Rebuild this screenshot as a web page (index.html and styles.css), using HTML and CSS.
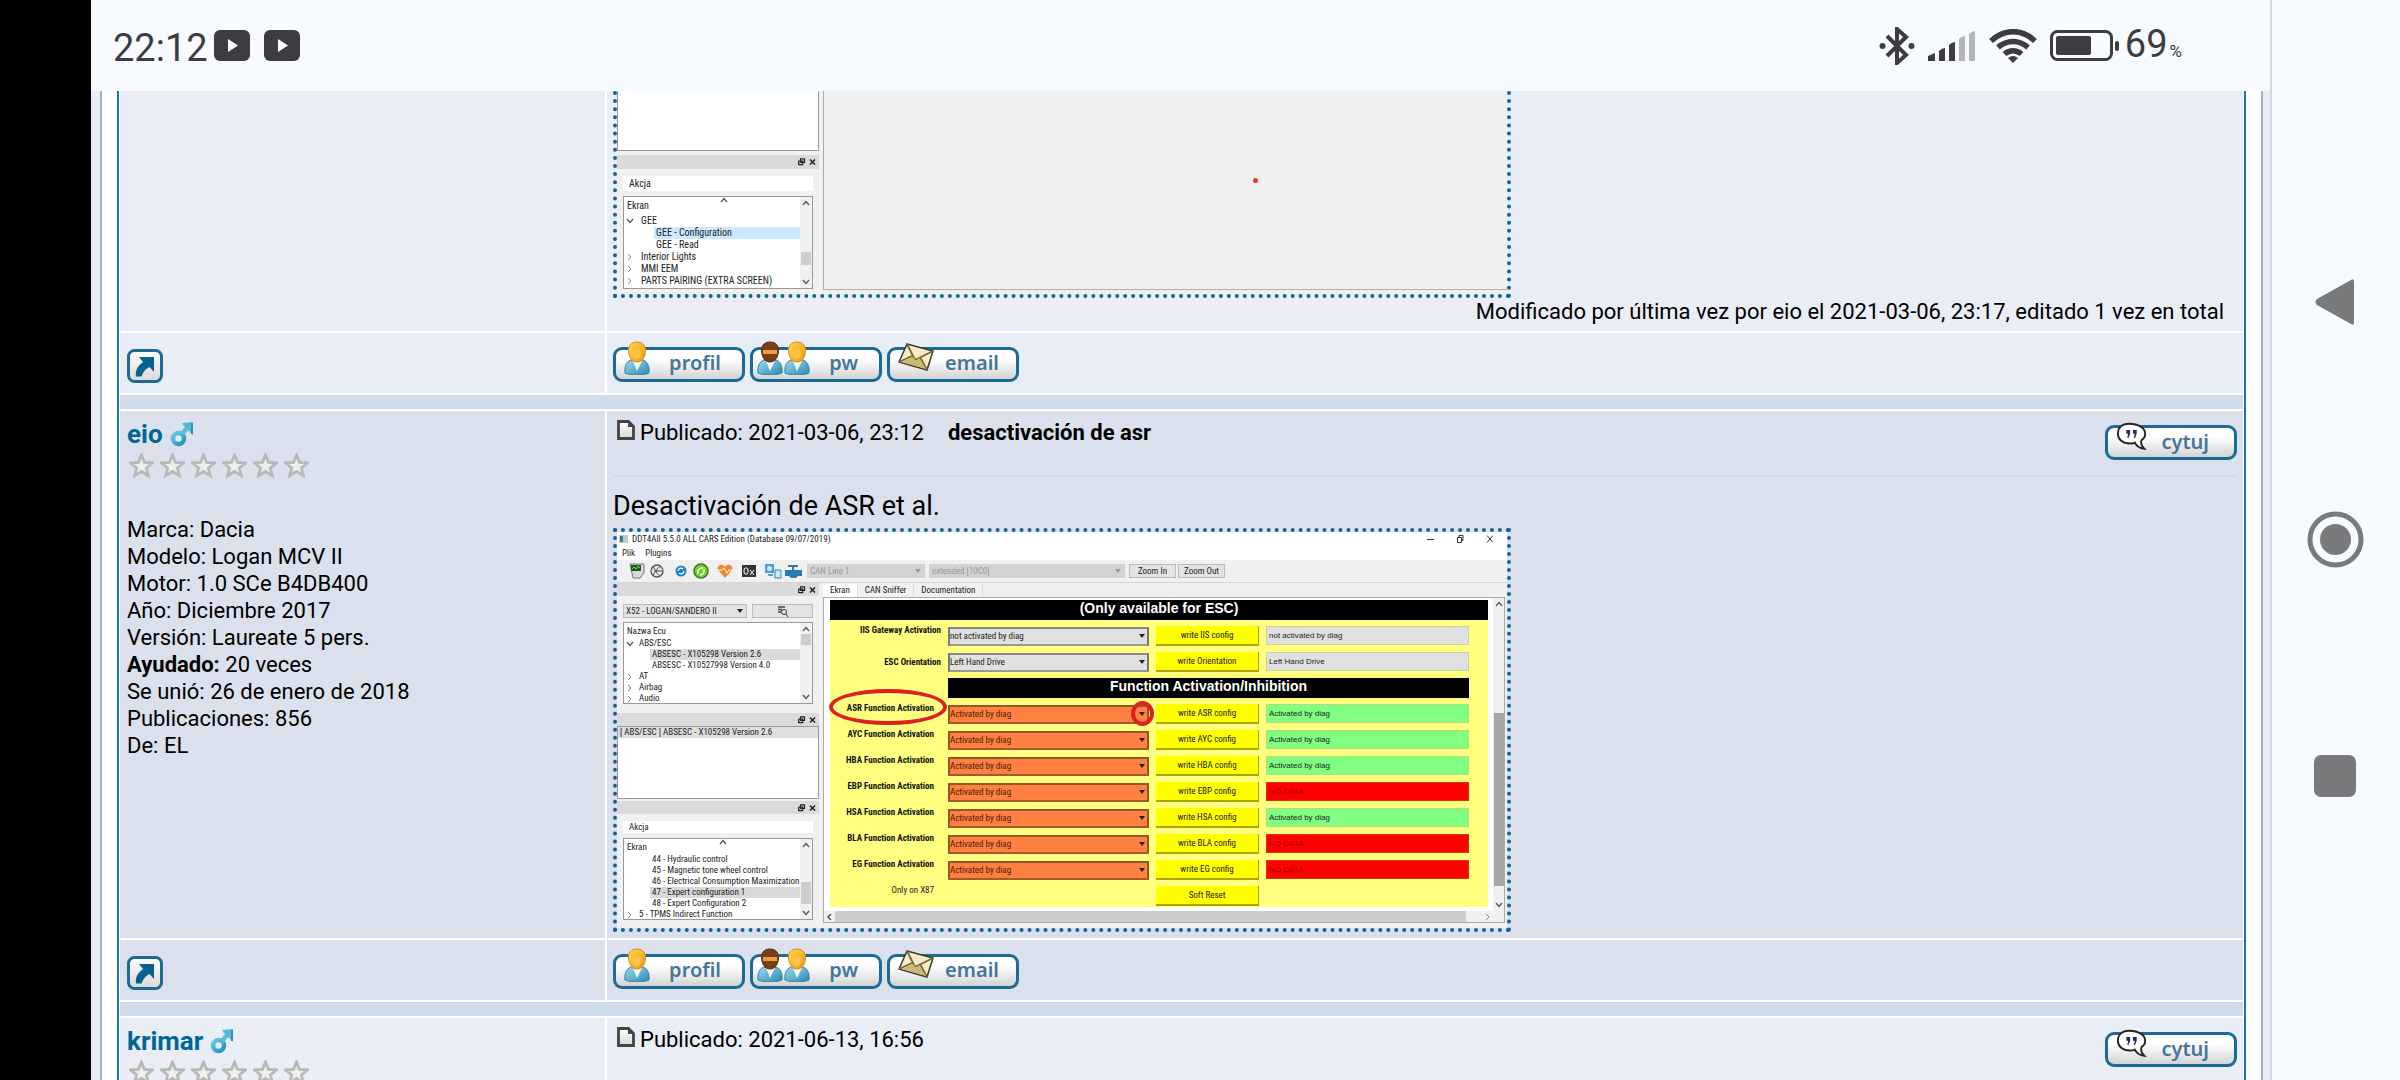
FILE: index.html
```html
<!DOCTYPE html>
<html lang="es">
<head>
<meta charset="utf-8">
<meta name="viewport" content="width=device-width, initial-scale=1">
<title>desactivación de asr</title>
<link rel="stylesheet" href="styles.css">
</head>
<body>
<svg class="sprite" aria-hidden="true">
  <defs>
    <linearGradient id="face" x1="0" y1="0" x2="0" y2="1"><stop offset="0" stop-color="#fff"/><stop offset="1" stop-color="#d8d8d8"/></linearGradient>
    <linearGradient id="coat" x1="0" y1="0" x2="1" y2="1"><stop offset="0" stop-color="#9fdcf0"/><stop offset="1" stop-color="#2c88ae"/></linearGradient>
    <linearGradient id="hair" x1="0" y1="0" x2="1" y2="1"><stop offset="0" stop-color="#ffd84a"/><stop offset="1" stop-color="#ee9412"/></linearGradient>
    <linearGradient id="male-fill" x1="0" y1="0" x2="1" y2="1"><stop offset="0" stop-color="#6fcbe6"/><stop offset="1" stop-color="#1f8fb8"/></linearGradient>
  </defs>
  <symbol id="youtube" viewBox="0 0 36 31"><rect width="36" height="31" rx="6" fill="#3d3d3f"/><path d="M14 9l10 6.500L14 22z" fill="#f7faff"/></symbol>
  <symbol id="male" viewBox="0 0 24 26"><circle cx="8.500" cy="17.500" r="5.500" fill="#d8f0f8" stroke="url(#male-fill)" stroke-width="4.500"/><path d="M12 13l6-7" stroke="#5dbedb" stroke-width="4.500"/><path d="M12 2l11-1v13l-4-4-5-5z" fill="#55b9d8"/><path d="M22 2v11" stroke="#2b93b8" stroke-width="2"/></symbol>
  <symbol id="star" viewBox="0 0 25 25"><path d="M12.500 2l3 7.300 7.900.600-6 5.100 1.900 7.700-6.800-4.200-6.800 4.200 1.900-7.700-6-5.100 7.900-.600z" fill="#eee" stroke="#b8b8b8" stroke-width="2.800"/></symbol>
  <symbol id="page" viewBox="0 0 18 20"><path d="M1.500 1.500h10l5 5v12h-15z" fill="url(#face)" stroke="#444" stroke-width="2.800"/><path d="M11 1v6h6z" fill="#444"/></symbol>
  <symbol id="top" viewBox="0 0 36 34"><rect x="1.500" y="1.500" width="33" height="31" rx="6" fill="url(#face)" stroke="#1d6a93" stroke-width="3"/><path d="M12 8h15v15l-4.500-5c-4 2-6 4.500-8 9.500H9c-1-6 2-11 7-14.500z" fill="#066090"/></symbol>
  <symbol id="person" viewBox="0 0 26 34"><path d="M1 32c-1-8 3-13 7-13h10c4 0 8 5 7 13-5 2.500-19 2.500-24 0z" fill="url(#coat)" stroke="#2d86a9"/><path d="M9 20l4 10 5-10z" fill="#f4fafd"/><path d="M13 1c6 0 9 4 8.500 9-.300 6-3 11-8.500 11S5 16 4.500 10C4 5 7 1 13 1z" fill="url(#hair)" stroke="#dd8c1c"/><path d="M8 10c3 1 5-1 7-3 0 2 2 3 3 3-.500 5-2 8-5 8s-5-3-5-8z" fill="#ffc14d"/></symbol>
  <symbol id="person-dark" viewBox="0 0 26 34"><path d="M1 32c-1-8 3-13 7-13h10c4 0 8 5 7 13-5 2.500-19 2.500-24 0z" fill="url(#coat)" stroke="#2d86a9"/><path d="M9 20l4 10 5-10z" fill="#f4fafd"/><path d="M13 1c6 0 9 4 8.500 9-.300 6-3 11-8.500 11S5 16 4.500 10C4 5 7 1 13 1z" fill="#7a3d17" stroke="#5e2e12"/><path d="M6 9h14v4H6z" fill="#e9a03a"/></symbol>
  <symbol id="mail" viewBox="0 0 36 30"><path d="M9 2l26 7-6 19L1 20z" fill="#f6ecc4" stroke="#3e3a2c" stroke-width="1.500"/><path d="M9 2l8 16 18-9M1 20l13-6M29 28l-7-13" fill="none" stroke="#756839" stroke-width="1.800"/><path d="M3 20l12-5 3 4 3-3 7 11z" fill="#cdb873"/></symbol>
  <symbol id="quote" viewBox="0 0 34 30"><path d="M14 1.500C6 1.500 2 6 2 12s5 10.500 13 10.500c2 0 4 0 5-1 2 4 5 6 10 6.500-3-3-4-6-3-9 3-2 4-4 4-7C31 6 24 1.500 14 1.500z" fill="#fff" stroke="#222" stroke-width="2"/><path d="M11 8h4v4l-2 5-1-1 1-4h-2zM18 8h4v4l-2 5-1-1 1-4h-2z" fill="#26246b"/></symbol>
  <symbol id="drop" viewBox="0 0 6 4"><path d="M0 0h6L3 4z" fill="currentColor"/></symbol>
  <symbol id="chev-up" viewBox="0 0 8 6"><path d="M1 5l3-3.500L7 5" fill="none" stroke="#555" stroke-width="1.300"/></symbol>
  <symbol id="chev-down" viewBox="0 0 8 6"><path d="M1 1l3 3.500L7 1" fill="none" stroke="#555" stroke-width="1.300"/></symbol>
  <symbol id="chev-right" viewBox="0 0 8 6"><path d="M2 0l3 3-3 3" fill="none" stroke="#888" stroke-width="1"/></symbol>
  <symbol id="chev-left" viewBox="0 0 8 6"><path d="M6 0L3 3l3 3" fill="none" stroke="#555" stroke-width="1.500"/></symbol>
  <symbol id="dock-ctl" viewBox="0 0 18 8"><path d="M2.500.800h4v3.500h-4zM.700 3h4v3.600h-4z" fill="#ddd" stroke="#222" stroke-width="1.200"/><path d="M12 1.500l5 5M17 1.500l-5 5" stroke="#222" stroke-width="1.500"/></symbol>
</svg>

<div class="device">
  <div class="notch"></div>
  <div class="screen">
    <header class="status">
      <span class="clock">22:12</span>
      <svg class="yt" aria-label="YouTube"><use href="#youtube"/></svg>
      <svg class="yt" aria-label="YouTube"><use href="#youtube"/></svg>
      <div class="signals">
        <svg width="36" height="38" viewBox="0 0 36 38"><path d="M8 9l19 19-9 8V2l9 8L8 29" fill="none" stroke="#3d3d3f" stroke-width="4"/><circle cx="3.500" cy="19" r="3" fill="#3d3d3f"/><circle cx="32.500" cy="19" r="3" fill="#3d3d3f"/></svg>
        <svg width="48" height="30" viewBox="0 0 48 30"><g fill="#3d3d3f"><path d="M0 25l7-3v8H0z"/><path d="M11 20q3-3 6-3v13h-6z"/><path d="M21 14q3-3 6-3v19h-6z"/></g><g fill="#b4b4b6"><path d="M31 8q3-3 6-3v25h-6z"/><path d="M41 3q3-3 6-3v30h-6z"/></g></svg>
        <svg width="48" height="34" viewBox="0 0 48 34"><g fill="none" stroke="#3d3d3f" stroke-width="5.500"><path d="M2 12C15-.500 33-.500 46 12"/><path d="M9 18.500c9-8 21-8 30 0"/><path d="M15.500 25c5-4.500 12-4.500 17 0"/></g><path d="M19 29q5-4 10 0l-5 5z" fill="#3d3d3f"/></svg>
        <svg width="70" height="31" viewBox="0 0 70 31"><rect x="1.500" y="1.500" width="60" height="28" rx="6" fill="none" stroke="#3d3d3f" stroke-width="3"/><rect x="6" y="6" width="35" height="19" rx="2" fill="#3d3d3f"/><rect x="65" y="11" width="4" height="10" rx="2" fill="#3d3d3f"/></svg>
        <span class="level">69<small>%</small></span>
      </div>
    </header>

    <div class="viewport">
      <main class="forum">
        <article class="post odd">
          <div class="cell"></div>
          <div class="cell clipped">
            <div class="shot shot-cut">
              <div class="docks">
                <div class="pane blank"></div>
                <div class="dock-title"><svg class="dock-ctl"><use href="#dock-ctl"/></svg></div>
                <div class="filter">Akcja</div>
                <div class="tree sorted">
                  <div class="tree-body">
                    <div class="tree-head">Ekran<svg><use href="#chev-up"/></svg></div>
                    <div class="leaf"><svg><use href="#chev-down"/></svg>GEE</div>
                    <div class="leaf deep picked">GEE - Configuration</div>
                    <div class="leaf deep">GEE - Read</div>
                    <div class="leaf"><svg><use href="#chev-right"/></svg>Interior Lights</div>
                    <div class="leaf"><svg><use href="#chev-right"/></svg>MMI EEM</div>
                    <div class="leaf"><svg><use href="#chev-right"/></svg>PARTS PAIRING (EXTRA SCREEN)</div>
                  </div>
                  <div class="scroll"><svg><use href="#chev-up"/></svg><i class="thumb low"></i><svg><use href="#chev-down"/></svg></div>
                </div>
              </div>
              <div class="void"><i class="dot"></i></div>
            </div>
            <p class="edited">Modificado por última vez por eio el 2021-03-06, 23:17, editado 1 vez en total</p>
          </div>
          <div class="cell bar"><a href="#" aria-label="Arriba"><svg class="to-top"><use href="#top"/></svg></a></div>
          <div class="cell bar">
            <a class="pill" href="#"><svg class="who"><use href="#person"/></svg><span>profil</span></a>
            <a class="pill" href="#"><svg class="who"><use href="#person-dark"/></svg><svg class="who"><use href="#person"/></svg><span>pw</span></a>
            <a class="pill" href="#"><svg class="letter"><use href="#mail"/></svg><span>email</span></a>
          </div>
          <div class="rule"></div>
        </article>

        <article class="post even">
          <div class="cell author">
            <div class="name"><a href="#">eio</a><svg class="sex"><use href="#male"/></svg></div>
            <div class="stars"><svg><use href="#star"/></svg><svg><use href="#star"/></svg><svg><use href="#star"/></svg><svg><use href="#star"/></svg><svg><use href="#star"/></svg><svg><use href="#star"/></svg></div>
            <div class="details">
              Marca: Dacia<br>Modelo: Logan MCV II<br>Motor: 1.0 SCe B4DB400<br>Año: Diciembre 2017<br>Versión: Laureate 5 pers.<br><b>Ayudado:</b> 20 veces<br>Se unió: 26 de enero de 2018<br>Publicaciones: 856<br>De: EL
            </div>
          </div>
          <div class="cell">
            <div class="meta">
              <a href="#" aria-label="Mensaje"><svg class="page"><use href="#page"/></svg></a>
              <span>Publicado: 2021-03-06, 23:12</span><b>desactivación de asr</b>
              <a class="pill quote" href="#"><svg class="bubble"><use href="#quote"/></svg><span>cytuj</span></a>
            </div>
            <p class="message">Desactivación de ASR et al.</p>
            <div class="shot">
              <div class="win-title"><svg width="9" height="8"><path d="M0 0h9v8H0z" fill="#b5cfd0"/><path d="M1 1h3v6H1z" fill="#52777a"/></svg><span>DDT4All 5.5.0 ALL CARS Edition (Database 09/07/2019)</span>
                <svg class="win-ctl" viewBox="0 0 66 8"><g fill="none" stroke="#333"><path d="M0 4.500h7M30.500 2.500h4v5h-4zM32 2V.500h4v5h-1M60 .500l6 7M66 .500l-6 7"/></g></svg></div>
              <div class="menu"><span>Plik</span><span>Plugins</span></div>
              <div class="toolbar">
                <svg class="tools" viewBox="0 0 174 16">
                  <path d="M1 1h14v9l-4 5H4z" fill="#d8ddd4" stroke="#777"/><path d="M2 2h10v6H2z" fill="#195c1c"/><path d="M3 6l2-2 2 2 2-3 2 2" fill="none" stroke="#7be05b"/>
                  <circle cx="28" cy="8" r="6" fill="#e4e4e4" stroke="#555" stroke-width="1.300"/><path d="M24 4l3 4-3 4M31 4c-5 2-5 6 0 9M25 8h8" fill="none" stroke="#555"/>
                  <circle cx="52" cy="8" r="5.500" fill="#1b83c8"/><path d="M49 8a3 3 0 0 1 5-2M55 8a3 3 0 0 1-5 2" fill="none" stroke="#fff" stroke-width="1.300"/>
                  <circle cx="72" cy="8" r="7" fill="#74cf2a" stroke="#3a7d23" stroke-width="1.600"/><path d="M69 11c-1-4 1-6 5-6M75 6c1 3-1 6-4 6" fill="none" stroke="#eaffcf" stroke-width="1.800"/>
                  <path d="M96 15l-7-8c-2-4 4-8 7-3 3-5 9-1 7 3z" fill="#f3872c"/><path d="M89 7h4l2-2 3 5 2-3h4" fill="none" stroke="#fff"/>
                  <path d="M113 2h14v12h-14z" fill="#333"/><path d="M116 5h2q1 0 1 3t-1 3h-2q-1 0-1-3t1-3zM121 7l4 5M125 7l-4 5" fill="none" stroke="#fff"/>
                  <path d="M136 1h9v9h-9z" fill="#4c9fdc"/><circle cx="140.500" cy="5.500" r="2.500" fill="#d5ecfa"/><path d="M146 7h6v8h-6z" fill="#cde5f5" stroke="#2a83c2"/><path d="M139 12h5" stroke="#2a83c2" stroke-width="1.500"/>
                  <path d="M159 2h10v2h-4v3h8v6h-4l-2 2h-5l-2-2h-4V7h7V4h-4z" fill="#2b7bb2"/>
                </svg>
                <label class="combo off line"><select disabled aria-label="Línea CAN"><option>CAN Line 1</option></select><svg><use href="#drop"/></svg></label>
                <label class="combo off session"><select disabled aria-label="Sesión"><option>extended [10C0]</option></select><svg><use href="#drop"/></svg></label>
                <button class="tool">Zoom In</button><button class="tool">Zoom Out</button>
              </div>
              <div class="workspace">
                <div class="docks">
                  <div class="dock-title"><svg class="dock-ctl"><use href="#dock-ctl"/></svg></div>
                  <div class="search">
                    <label class="combo car"><select aria-label="Vehículo"><option>X52 - LOGAN/SANDERO II</option></select><svg><use href="#drop"/></svg></label>
                    <button class="tool" aria-label="Buscar"><svg width="12" height="11"><path d="M1 1h7M1 3.500h4M1 6h3" stroke="#444" stroke-width="1.500"/><circle cx="7" cy="6" r="2.500" fill="none" stroke="#333"/><path d="M9 8l2 3" stroke="#333"/></svg></button>
                  </div>
                  <div class="tree">
                    <div class="tree-body">
                      <div class="tree-head">Nazwa Ecu</div>
                      <div class="leaf"><svg><use href="#chev-down"/></svg>ABS/ESC</div>
                      <div class="leaf deep picked">ABSESC - X105298 Version 2.6</div>
                      <div class="leaf deep">ABSESC - X10527998 Version 4.0</div>
                      <div class="leaf"><svg><use href="#chev-right"/></svg>AT</div>
                      <div class="leaf"><svg><use href="#chev-right"/></svg>Airbag</div>
                      <div class="leaf"><svg><use href="#chev-right"/></svg>Audio</div>
                    </div>
                    <div class="scroll"><svg><use href="#chev-up"/></svg><i class="thumb"></i><svg><use href="#chev-down"/></svg></div>
                  </div>
                  <div class="dock-title"><svg class="dock-ctl"><use href="#dock-ctl"/></svg></div>
                  <div class="pane"><div class="current">[ ABS/ESC ] ABSESC - X105298 Version 2.6</div></div>
                  <div class="dock-title"><svg class="dock-ctl"><use href="#dock-ctl"/></svg></div>
                  <div class="filter">Akcja</div>
                  <div class="tree sorted">
                    <div class="tree-body">
                      <div class="tree-head">Ekran<svg><use href="#chev-up"/></svg></div>
                      <div class="leaf deep">44 - Hydraulic control</div>
                      <div class="leaf deep">45 - Magnetic tone wheel control</div>
                      <div class="leaf deep">46 - Electrical Consumption Maximization</div>
                      <div class="leaf deep picked">47 - Expert configuration 1</div>
                      <div class="leaf deep">48 - Expert Configuration 2</div>
                      <div class="leaf"><svg><use href="#chev-right"/></svg>5 - TPMS Indirect Function</div>
                    </div>
                    <div class="scroll"><svg><use href="#chev-up"/></svg><i class="thumb mid"></i><svg><use href="#chev-down"/></svg></div>
                  </div>
                </div>
                <div class="stage">
                  <div class="tabs"><span class="on">Ekran</span><span>CAN Sniffer</span><span>Documentation</span></div>
                  <div class="frame">
                    <div class="sheet">
                      <h3>(Only available for ESC)</h3>
                      <div class="params">
                        <b class="wide">IIS Gateway Activation</b><label class="combo grey"><select aria-label="IIS"><option>not activated by diag</option></select><svg><use href="#drop"/></svg></label><button>write IIS config</button><output class="grey">not activated by diag</output>
                        <b class="wide down">ESC Orientation</b><label class="combo grey"><select aria-label="ESC"><option>Left Hand Drive</option></select><svg><use href="#drop"/></svg></label><button>write Orientation</button><output class="grey">Left Hand Drive</output>
                        <h3>Function Activation/Inhibition</h3>
                        <b class="ringed">ASR Function Activation<i class="ring"></i></b><label class="combo"><select aria-label="ASR"><option>Activated by diag</option></select><svg><use href="#drop"/></svg><i class="ring small"></i></label><button>write ASR config</button><output>Activated by diag</output>
                        <b>AYC Function Activation</b><label class="combo"><select aria-label="AYC"><option>Activated by diag</option></select><svg><use href="#drop"/></svg></label><button>write AYC config</button><output>Activated by diag</output>
                        <b>HBA Function Activation</b><label class="combo"><select aria-label="HBA"><option>Activated by diag</option></select><svg><use href="#drop"/></svg></label><button>write HBA config</button><output>Activated by diag</output>
                        <b>EBP Function Activation</b><label class="combo"><select aria-label="EBP"><option>Activated by diag</option></select><svg><use href="#drop"/></svg></label><button>write EBP config</button><output class="none">NO DATA</output>
                        <b>HSA Function Activation</b><label class="combo"><select aria-label="HSA"><option>Activated by diag</option></select><svg><use href="#drop"/></svg></label><button>write HSA config</button><output>Activated by diag</output>
                        <b>BLA Function Activation</b><label class="combo"><select aria-label="BLA"><option>Activated by diag</option></select><svg><use href="#drop"/></svg></label><button>write BLA config</button><output class="none">NO DATA</output>
                        <b>EG Function Activation</b><label class="combo"><select aria-label="EG"><option>Activated by diag</option></select><svg><use href="#drop"/></svg></label><button>write EG config</button><output class="none">NO DATA</output>
                        <span class="note">Only on X87</span><button class="reset">Soft Reset</button>
                      </div>
                    </div>
                    <div class="scroll"><svg><use href="#chev-up"/></svg><i class="thumb tall"></i><svg><use href="#chev-down"/></svg></div>
                    <div class="hscroll"><svg><use href="#chev-left"/></svg><i></i><svg><use href="#chev-right"/></svg></div>
                  </div>
                </div>
              </div>
            </div>
          </div>
          <div class="cell bar"><a href="#" aria-label="Arriba"><svg class="to-top"><use href="#top"/></svg></a></div>
          <div class="cell bar">
            <a class="pill" href="#"><svg class="who"><use href="#person"/></svg><span>profil</span></a>
            <a class="pill" href="#"><svg class="who"><use href="#person-dark"/></svg><svg class="who"><use href="#person"/></svg><span>pw</span></a>
            <a class="pill" href="#"><svg class="letter"><use href="#mail"/></svg><span>email</span></a>
          </div>
          <div class="rule"></div>
        </article>

        <article class="post odd">
          <div class="cell author">
            <div class="name"><a href="#">krimar</a><svg class="sex"><use href="#male"/></svg></div>
            <div class="stars"><svg><use href="#star"/></svg><svg><use href="#star"/></svg><svg><use href="#star"/></svg><svg><use href="#star"/></svg><svg><use href="#star"/></svg><svg><use href="#star"/></svg></div>
          </div>
          <div class="cell">
            <div class="meta">
              <a href="#" aria-label="Mensaje"><svg class="page"><use href="#page"/></svg></a>
              <span>Publicado: 2021-06-13, 16:56</span>
              <a class="pill quote" href="#"><svg class="bubble"><use href="#quote"/></svg><span>cytuj</span></a>
            </div>
          </div>
        </article>
      </main>
    </div>
  </div>
  <nav class="keys">
    <button aria-label="Atrás"><svg width="40" height="48"><path d="M36 2q3-2 3 2v40q0 4-3 2L2 27q-3-3 0-6z" fill="#787a7b"/></svg></button>
    <button aria-label="Inicio"><svg width="57" height="57"><circle cx="28.500" cy="28.500" r="25.500" fill="none" stroke="#787a7b" stroke-width="5"/><circle cx="28.500" cy="28.500" r="15.500" fill="#787a7b"/></svg></button>
    <button aria-label="Recientes"><svg width="42" height="42"><rect width="42" height="42" rx="7" fill="#787a7b"/></svg></button>
  </nav>
</div>
</body>
</html>
```
FILE: styles.css
```css
* { box-sizing: border-box; }
body { margin: 0; background: #000; color: #000; font-family: Roboto, sans-serif; font-size: 22px; line-height: 27px; }
p, h3 { margin: 0; }
a { color: #069; text-decoration: none; }
svg { display: block; flex: none; }
i { display: block; }
.sprite { position: absolute; width: 0; height: 0; }

/* phone shell */
.device { display: grid; grid-template-columns: 91px 1fr 130px; height: 100vh; overflow: hidden; }
.screen { display: flex; flex-direction: column; min-width: 0; min-height: 0; background: #e9edf5; }
.status { display: flex; align-items: center; flex: none; height: 91px; padding: 0 88px 0 22px; background: #f7faff; color: #3d3d3f; }
.clock { margin-right: 6px; font-size: 38px; line-height: 44px; padding-top: 4px; }
.yt { width: 36px; height: 31px; margin-right: 14px; }
.signals { display: flex; align-items: center; gap: 13px; margin-left: auto; }
.level { margin-left: -8px; padding-top: 4px; font-size: 38px; line-height: 44px; }
.level small { margin-left: 2px; font-size: 17px; }
.keys { display: flex; flex-direction: column; align-items: center; justify-content: center; gap: 60px; padding: 0 2px 2px 0; background: #f7faff; border-left: 2px solid #d5d9e4; }
.keys button { display: grid; place-items: center; width: 100px; height: 177px; padding: 0; border: 0; background: none; }

/* forum */
.viewport { flex: 1; min-height: 0; overflow: hidden; margin: 0 7px 0 9px; padding: 0 15px; background: #fff; border: 2px solid #a3b1bd; border-width: 0 2px; }
.forum { padding: 0 1px; border: 2px solid #1b7499; border-width: 0 2px; }
.post { display: grid; grid-template-columns: 485px 1fr; gap: 2px; margin-bottom: 2px; }
.cell { min-width: 0; padding: 6px; background: #dae1ec; }
.odd .cell { background: #e9edf5; }
.cell.author { padding: 6px 7px; }
.cell.clipped { display: flex; flex-direction: column; height: 240px; padding: 0 6px; }
.rule { grid-column: 1 / -1; height: 14px; background: #cfdbe8; }
.bar { display: flex; align-items: center; gap: 5px; height: 60px; }
.edited { padding: 0 13px; text-align: right; }
.to-top { width: 36px; height: 34px; margin: 5px 1px 0; }
.name { display: flex; align-items: center; gap: 7px; height: 34px; font-size: 26px; line-height: 34px; font-weight: 700; }
.sex { width: 24px; height: 26px; }
.stars { display: flex; gap: 6px; padding: 2px; }
.stars svg { width: 25px; height: 25px; }
.details { padding: 36px 0 0; }
.meta { display: flex; height: 60px; border-bottom: 2px solid #cfdce8; padding-left: 3px; }
.meta span, .meta b { padding-top: 2px; }
.meta b { margin-left: 24px; }
.page { width: 18px; height: 20px; margin: 3px 5px 0 1px; }
.message { padding: 12px 0 5px; font-size: 27px; line-height: 34px; }

/* forum image buttons */
.pill { display: flex; align-items: center; width: 132px; height: 35px; padding: 0 21px 0 8px; border: 3px solid #1a6c96; border-radius: 9px; background: linear-gradient(#fff 30%, #d3d3d3); color: #44759a; font: 600 20px/26px "Noto Sans", sans-serif; }
.bar .pill { margin-top: 2px; }
.pill span { margin-left: auto; padding-bottom: 2px; }
.pill:has(.who + .who) { padding-left: 4px; }
.pill:has(.letter) { padding-right: 17px; }
.who { width: 26px; height: 34px; margin: -12px 1px 0 0; }
.letter { width: 36px; height: 30px; margin: -14px 0 0; }
.quote { margin: 8px 0 0 auto; padding-right: 25px; }
.meta .quote span { padding: 0 0 2px; }
.bubble { width: 32px; height: 29px; margin-top: -12px; }

/* attached screen captures */
.shot { width: 898px; height: 404px; border: 4px dotted #116592; background: #f0f0f0 padding-box; color: #222; font: 9px/11px "Liberation Sans Narrow", "Roboto Condensed", Roboto, sans-serif; white-space: nowrap; }
.shot-cut { display: flex; gap: 4px; flex: none; height: 207px; border-top: 0; font-size: 10px; line-height: 12px; }
.shot select, .shot button { margin: 0; font: inherit; color: inherit; }
.docks { width: 202px; flex: none; }
.dock-title { display: flex; align-items: center; justify-content: flex-end; height: 13px; padding-right: 3px; background: #dadada; }
.dock-ctl { width: 18px; height: 8px; }
.pane { height: 73px; margin-bottom: 2px; background: #fff; border: 1px solid #999; }
.pane.blank { height: 60px; margin-bottom: 4px; border-top: 0; }
.current { background: #dedede; padding-left: 2px; }
.filter { margin: 7px 6px 5px; padding-left: 6px; line-height: 12px; background: #fff; }
.tree { display: flex; height: 82px; margin: 0 6px; border: 1px solid #999; background: #fff; overflow: hidden; }
.tree-body { flex: 1; overflow: hidden; }
.tree-head { display: flex; height: 15px; padding: 3px 0 0 3px; }
.sorted .tree-head { padding-top: 0; line-height: 17px; }
.tree-head svg { width: 8px; height: 6px; margin: 0 auto; }
.leaf { display: flex; align-items: center; padding-left: 2px; }
.leaf svg { width: 8px; height: 6px; margin-right: 5px; }
.deep { margin-left: 26px; }
.picked { background: #d9d9d9; }
.shot-cut .picked { background: #cce8ff; }
.shot-cut .deep { margin-left: 30px; }
.shot-cut .leaf svg { margin-right: 7px; }
.shot-cut .dock-title { height: 14px; }
.shot-cut .filter { margin: 7px 6px 5px; line-height: 15px; }
.shot-cut .tree { height: 93px; }
.shot-cut .tree-head { height: 18px; }
.void { flex: 1; margin-bottom: 4px; border: 1px solid #aaa; border-width: 0 0 1px 1px; }
.dot { width: 5px; height: 5px; margin: 87px 0 0 429px; border-radius: 50%; background: #e33; }
.scroll { display: flex; flex-direction: column; align-items: center; justify-content: space-between; width: 12px; padding: 3px 0; background: #f0f0f0; }
.scroll svg { width: 8px; height: 6px; }
.thumb { width: 10px; height: 11px; margin: 2px 0 auto; background: #cdcdcd; }
.thumb.mid { height: 22px; margin: auto 0 6px; }
.thumb.low { height: 13px; margin: auto 0 14px; }
.thumb.tall { height: 173px; margin: auto 0 16px; background: #a6a6a6; }
.win-title { display: flex; align-items: center; gap: 4px; height: 14px; padding: 0 14px 0 2px; background: #fff; }
.win-ctl { width: 66px; height: 8px; margin-left: auto; }
.menu { display: flex; gap: 10px; height: 14px; padding: 2px 5px; background: #fff; }
.toolbar { display: flex; align-items: center; height: 23px; padding-left: 12px; border-bottom: 1px solid #d5d5d5; }
.tools { width: 174px; height: 16px; margin-right: 4px; }
.tool { width: 47px; height: 14px; padding: 0; border: 1px solid #bbb; background: #e3e3e3; }
.tool svg { margin: auto; }
.toolbar .tool { margin-right: 2px; }
.combo { position: relative; display: grid; align-items: center; }
.combo > * { grid-area: 1 / 1; }
.combo > svg { justify-self: end; width: 6px; height: 4px; margin-right: 4px; pointer-events: none; }
.combo select { appearance: none; width: 100%; height: 14px; padding: 0 2px; border: 1px solid #bbb; border-radius: 0; background: #e3e3e3; opacity: 1; }
.combo.off { margin-right: 4px; color: #999; }
.off select { background: #d2d2d2; border-color: #d2d2d2; }
.line { width: 118px; }
.session { width: 196px; }
.workspace { display: flex; gap: 3px; }
.search { display: flex; gap: 5px; padding: 8px 6px 4px; }
.car { width: 124px; }
.search .tool { flex: 1; }
.docks .search + .tree { margin-bottom: 9px; }
.stage { flex: 1; padding: 1px 2px 0 1px; }
.tabs { display: flex; line-height: 13px; }
.tabs span { padding: 0 7px; border: 1px solid #ddd; border-width: 0 1px 0 0; }
.tabs .on { background: #fff; }
.frame { display: grid; grid-template-columns: 1fr 11px; grid-template-rows: 313px 11px; border: 1px solid #aaa; background: #fff; }
.frame .scroll { width: 11px; }
.sheet { margin: 2px 5px 4px 6px; background: #ffff80; }
.shot h3 { height: 20px; background: #000; color: #fff; text-align: center; font: 700 14px/17px "Liberation Sans", Arial, sans-serif; }
.params { display: grid; grid-template-columns: 111px 201px 103px 203px; grid-auto-rows: 20px; gap: 6px 7px; padding-top: 6px; color: #222; }
.params h3 { grid-column: 2 / -1; }
.params b { padding-right: 7px; text-align: right; line-height: 9px; color: #111; }
.params .wide { padding-right: 0; }
.params .down { padding-top: 6px; }
.params .note { padding-right: 7px; text-align: right; line-height: 9px; }
.params .reset { grid-column: 3; }
.params button { padding: 0; border: solid #a8a800; border-width: 0 1px 2px 0; background: #ff0; }
.params select { height: 19px; padding: 0; border: 2px solid; border-color: #8f5a28 #8f5a28 #a35c27 #8f5a28; background: #ff8040; color: #4a1c0a; }
.params .grey select { border-color: #888 #777 #999 #777; background: #e0e0e0; color: #222; }
.params output { height: 19px; padding-left: 2px; border: 1px solid #b5dc7c; background: #80ff80; font: 8px/17px "Liberation Sans", Arial, sans-serif; }
.params output.grey { border-color: #cfcf9c; background: #e0e0e0; }
.params output.none { border-color: #d63a00; background: #f00; color: #a00; }
.ringed { position: relative; }
.ring { position: absolute; inset: -15px -6px -1px -1px; border: 4px solid #e02020; border-radius: 50%; }
.ring.small { inset: -3px -5px -2px auto; width: 23px; }
.hscroll { grid-column: 1 / -1; display: flex; align-items: center; padding: 0 12px 0 1px; background: #f0f0f0; }
.hscroll i { flex: 1; height: 11px; margin: 0 18px 0 2px; background: #cdcdcd; }
.hscroll svg { width: 8px; height: 6px; }
```
